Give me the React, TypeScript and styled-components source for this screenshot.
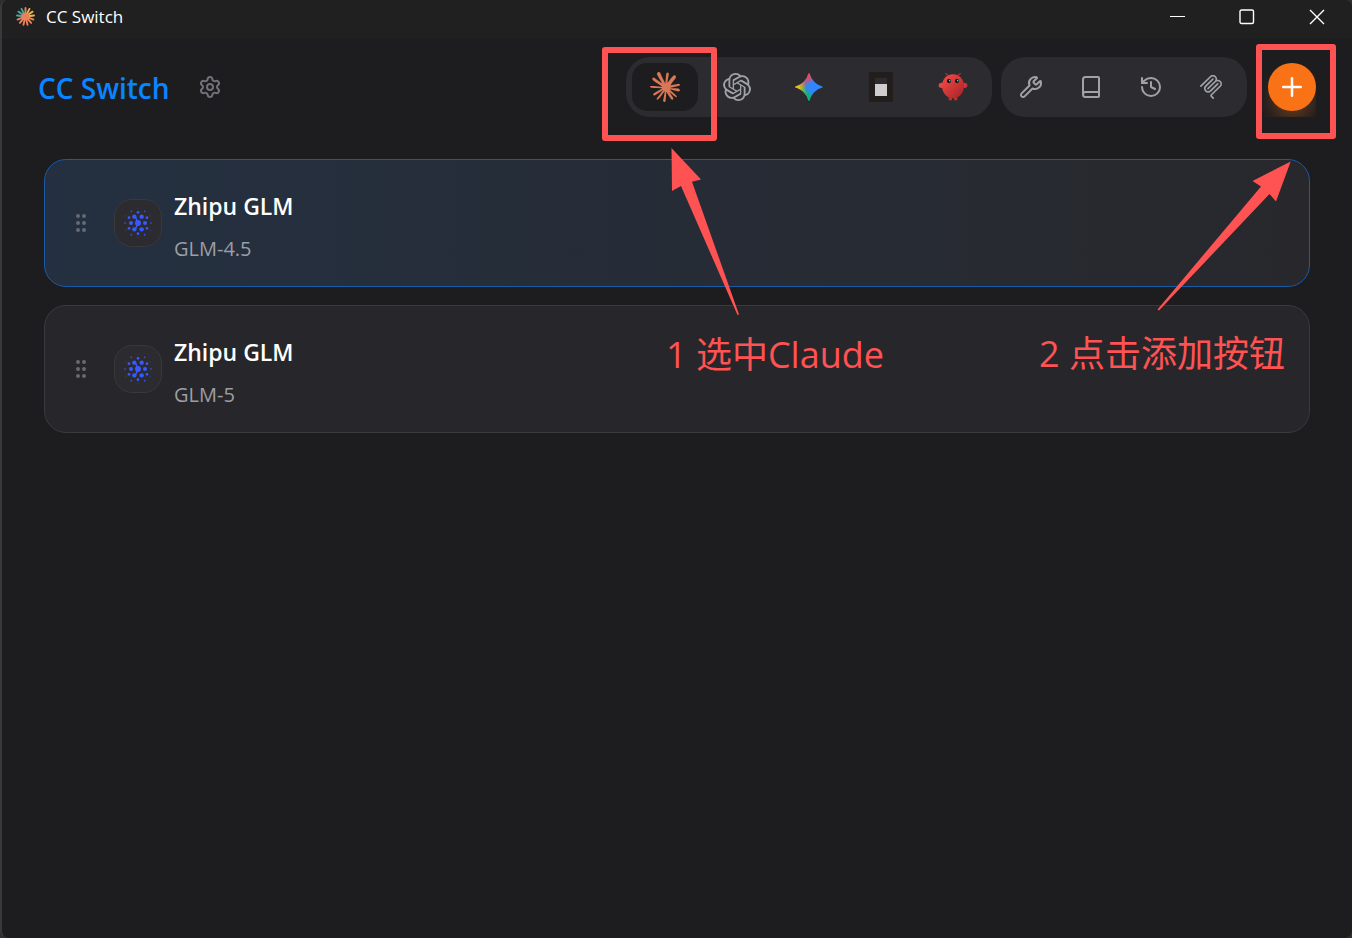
import React from "react";
import styled, { createGlobalStyle, css } from "styled-components";
import { Book, GripVertical, History, Plus, Settings, Wrench } from "lucide-react";
import { SiOpenai } from "react-icons/si";

const GlobalStyle = createGlobalStyle`
  *, *::before, *::after { box-sizing: border-box; }
  body {
    margin: 0;
    background: #2f2f30;
    color: #fafafa;
    font-family: "Open Sans", "Noto Sans CJK SC", sans-serif;
  }
  button { font: inherit; color: inherit; background: none; border: 0; padding: 0; cursor: pointer; }
  svg { display: block; flex: none; }
`;

const Window = styled.div`
  position: relative;
  min-height: 100vh;
  overflow: hidden;
  border-left: 2px solid #39393a;
  border-radius: 8px;
  background: #1d1d1f;
`;

const TitleBar = styled.div`
  display: flex;
  align-items: center;
  justify-content: space-between;
  height: 39px;
  padding: 0 0 6px 14px;
  background: #202020;
`;

const WindowTitle = styled.div`
  display: flex;
  align-items: center;
  gap: 11px;
  font-size: 17px;
  line-height: 24px;
  color: #ffffff;
`;

const WindowControls = styled.div`
  display: flex;
`;

const WindowButton = styled.button`
  display: grid;
  place-items: center;
  width: 70px;
  height: 32px;
`;

const Header = styled.header`
  display: flex;
  align-items: center;
  justify-content: space-between;
  padding: 18px 36px;
`;

const Brand = styled.div`
  display: flex;
  align-items: center;
  gap: 28px;
`;

const BrandName = styled.h1`
  margin: 0;
  padding-top: 2px;
  font-size: 28px;
  line-height: 42px;
  font-weight: 600;
  color: #0a84ff;
`;

const IconButton = styled.button`
  display: grid;
  place-items: center;
  color: #71717a;
`;

const Toolbar = styled.div`
  display: flex;
  align-items: center;
  gap: 9px;
  overflow: hidden;
`;

const Segment = styled.div<{ $spaced?: boolean }>`
  display: flex;
  gap: ${(p) => (p.$spaced ? 12 : 6)}px;
  padding: 6px ${(p) => (p.$spaced ? 12 : 6)}px 6px 6px;
  border-radius: 24px;
  background: #2c2c30;
  color: #a1a1aa;
`;

const SegmentButton = styled.button<{ $width: number; $active?: boolean }>`
  display: grid;
  place-items: center;
  width: ${(p) => p.$width}px;
  height: 48px;
  border-radius: 15px;
  ${(p) =>
    p.$active &&
    css`
      background: #1d1d1f;
      color: #d97757;
    `}
`;

const AddButton = styled.button`
  display: grid;
  place-items: center;
  width: 48px;
  height: 48px;
  margin-left: 12px;
  border-radius: 50%;
  background: #f97316;
  color: #ffffff;
  box-shadow: 0 12px 18px -4px rgba(249, 115, 22, 0.35);
`;

const ProviderList = styled.ul`
  display: flex;
  flex-direction: column;
  gap: 18px;
  margin: 0;
  padding: 24px 42px;
  list-style: none;
`;

const ProviderCard = styled.li<{ $current?: boolean }>`
  display: flex;
  align-items: center;
  gap: 12px;
  padding: 24px;
  border: 1px solid ${(p) => (p.$current ? "#185ba6" : "#3a3a3d")};
  border-radius: 22px;
  background: ${(p) => (p.$current ? "linear-gradient(90deg, #243041, #28282c)" : "#27272b")};
`;

const DragHandle = styled.button`
  width: 33px;
  color: #68696f;
`;

const ProviderIcon = styled.div`
  display: grid;
  place-items: center;
  width: 48px;
  height: 48px;
  border: 1px solid #39393c;
  border-radius: 18px;
  background: #2c2c30;
`;

const ProviderName = styled.h2`
  margin: 0 0 8px;
  font-size: 23px;
  line-height: 44px;
  font-weight: 600;
  color: #ffffff;
`;

const ProviderModel = styled.p`
  margin: 0;
  font-size: 20px;
  line-height: 26px;
  color: #9d9da5;
`;

const Guide = styled.div`
  position: absolute;
  top: 0;
  right: 0;
  width: 760px;
  height: 400px;
  pointer-events: none;
  color: #ff5252;
`;

const Highlight = styled.div<{ $top: number; $right: number; $width: number; $height: number }>`
  position: absolute;
  top: ${(p) => p.$top}px;
  right: ${(p) => p.$right}px;
  width: ${(p) => p.$width}px;
  height: ${(p) => p.$height}px;
  border: 6px solid currentColor;
  border-radius: 3px;
`;

const GuideText = styled.span<{ $top: number; $left: number }>`
  position: absolute;
  top: ${(p) => p.$top}px;
  left: ${(p) => p.$left}px;
  font-size: 36px;
  line-height: 48px;
  white-space: nowrap;
`;

function AppLogo() {
  const colors = ["#e8825a", "#f0b04a", "#f0b04a", "#f0b04a", "#e8825a", "#e8825a", "#e8825a", "#e8825a", "#e8825a", "#e8825a", "#4fa3a0", "#4fa3a0", "#4fa3a0"];
  return (
    <svg width="19" height="19" viewBox="-10 -10 20 20" strokeWidth="2" strokeLinecap="round">
      {colors.map((c, i) => {
        const a = (i * 2 * Math.PI) / colors.length;
        return <line key={i} x1="0" y1="0" x2={9 * Math.sin(a)} y2={-9 * Math.cos(a)} stroke={c} />;
      })}
      <circle r="4" fill="#e8825a" />
    </svg>
  );
}

function ClaudeIcon() {
  return (
    <svg width="30" height="30" viewBox="0 0 24 24" fill="currentColor">
      <path d="M4.709 15.955l4.72-2.647.08-.23-.08-.128H9.2l-.79-.048-2.698-.073-2.339-.097-2.266-.122-.571-.121L0 11.784l.055-.352.48-.321.686.06 1.52.103 2.278.158 1.652.097 2.449.255h.389l.055-.157-.134-.098-.103-.097-2.358-1.596-2.552-1.688-1.336-.972-.724-.491-.364-.462-.158-1.008.656-.722.881.06.225.061.893.686 1.908 1.476 2.491 1.833.365.304.145-.103.019-.073-.164-.274-1.355-2.446-1.446-2.49-.644-1.032-.17-.619a2.97 2.97 0 01-.104-.729L6.283.134 6.696 0l.996.134.42.364.62 1.414 1.002 2.229 1.555 3.03.456.898.243.832.091.255h.158V9.01l.128-1.706.237-2.095.23-2.695.08-.76.376-.91.747-.492.584.28.48.685-.067.444-.286 1.851-.559 2.903-.364 1.942h.212l.243-.242.985-1.306 1.652-2.064.73-.82.85-.904.547-.431h1.033l.76 1.129-.34 1.166-1.064 1.347-.881 1.142-1.264 1.7-.79 1.36.073.11.188-.02 2.856-.606 1.543-.28 1.841-.315.833.388.091.395-.328.807-1.969.486-2.309.462-3.439.813-.042.03.049.061 1.549.146.662.036h1.622l3.02.225.79.522.474.638-.079.485-1.215.62-1.64-.389-3.829-.91-1.312-.329h-.182v.11l1.093 1.068 2.006 1.81 2.509 2.33.127.578-.322.455-.34-.049-2.205-1.657-.851-.747-1.926-1.62h-.128v.17l.444.649 2.345 3.521.122 1.08-.17.353-.608.213-.668-.122-1.374-1.925-1.415-2.167-1.143-1.943-.14.08-.674 7.254-.316.37-.729.28-.607-.461-.322-.747.322-1.476.389-1.924.315-1.53.286-1.9.17-.632-.012-.042-.14.018-1.434 1.967-2.18 2.945-1.726 1.845-.414.164-.717-.37.067-.662.401-.589 2.388-3.036 1.44-1.882.93-1.086-.006-.158h-.055L4.132 18.56l-1.13.146-.487-.456.061-.746.231-.243 1.908-1.312-.006.006z" />
    </svg>
  );
}

function GeminiIcon() {
  const star =
    "M20.616 10.835a14.147 14.147 0 01-4.45-3.001 14.111 14.111 0 01-3.678-6.452.503.503 0 00-.975 0 14.134 14.134 0 01-3.679 6.452 14.155 14.155 0 01-4.45 3.001c-.65.28-1.318.505-2.002.678a.502.502 0 000 .975c.684.172 1.35.397 2.002.677a14.147 14.147 0 014.45 3.001 14.112 14.112 0 013.679 6.453.502.502 0 00.975 0c.172-.685.397-1.351.677-2.003a14.145 14.145 0 013.001-4.45 14.113 14.113 0 016.453-3.678.503.503 0 000-.975 13.245 13.245 0 01-2.003-.678z";
  return (
    <svg width="30" height="30" viewBox="0 0 24 24">
      <defs>
        <linearGradient id="gem-green" gradientUnits="userSpaceOnUse" x1="7" x2="11" y1="15.5" y2="12">
          <stop stopColor="#08B962" />
          <stop offset="1" stopColor="#08B962" stopOpacity="0" />
        </linearGradient>
        <linearGradient id="gem-red" gradientUnits="userSpaceOnUse" x1="8" x2="11.5" y1="5.5" y2="11">
          <stop stopColor="#F94543" />
          <stop offset="1" stopColor="#F94543" stopOpacity="0" />
        </linearGradient>
        <linearGradient id="gem-yellow" gradientUnits="userSpaceOnUse" x1="3.5" x2="17.5" y1="13.5" y2="12">
          <stop stopColor="#FABC12" />
          <stop offset=".46" stopColor="#FABC12" stopOpacity="0" />
        </linearGradient>
      </defs>
      <path d={star} fill="#3186FF" />
      <path d={star} fill="url(#gem-green)" />
      <path d={star} fill="url(#gem-red)" />
      <path d={star} fill="url(#gem-yellow)" />
    </svg>
  );
}

function OpenCodeIcon() {
  return (
    <svg width="30" height="30" viewBox="0 0 30 30">
      <rect x="3" width="24" height="30" fill="#211e1b" />
      <rect x="9" y="6" width="12" height="6" fill="#2c2c30" />
      <rect x="9" y="12" width="12" height="12" fill="#cfcecd" />
    </svg>
  );
}

function ClawIcon() {
  return (
    <svg width="30" height="30" viewBox="0 0 90 90">
      <defs>
        <linearGradient id="claw" x1="0" y1="0" x2="1" y2="1">
          <stop stopColor="#fa4b4b" />
          <stop offset="1" stopColor="#a32222" />
        </linearGradient>
      </defs>
      <path d="M33 13Q29 5 23 5M57 13Q61 5 67 5" stroke="#c93e3e" strokeWidth="3" fill="none" strokeLinecap="round" />
      <circle cx="10" cy="40" r="8" fill="#e84545" />
      <circle cx="80" cy="40" r="8" fill="#c93434" />
      <path d="M32 72h10v13H32zM48 72h10v13H48z" fill="#b93030" />
      <path d="M45 7C65 7 78 24 78 42C78 62 63 79 45 79C27 79 12 62 12 42C12 24 25 7 45 7z" fill="url(#claw)" />
      <circle cx="33" cy="27" r="6" fill="#050810" />
      <circle cx="57" cy="27" r="6" fill="#050810" />
      <circle cx="35" cy="26" r="2.5" fill="#00e5cc" />
      <circle cx="59" cy="26" r="2.5" fill="#00e5cc" />
    </svg>
  );
}

function McpIcon() {
  return (
    <svg width="24" height="24" viewBox="0 0 24 24" fill="currentColor">
      <path d="M15.688 2.343a2.588 2.588 0 00-3.61 0l-9.626 9.44a.863.863 0 01-1.203 0 .823.823 0 010-1.18l9.626-9.44a4.313 4.313 0 016.016 0 4.116 4.116 0 011.204 3.54 4.3 4.3 0 013.609 1.18l.05.05a4.115 4.115 0 010 5.9l-8.706 8.537a.274.274 0 000 .393l1.788 1.754a.823.823 0 010 1.18.863.863 0 01-1.203 0l-1.788-1.753a1.92 1.92 0 010-2.754l8.706-8.538a2.47 2.47 0 000-3.54l-.05-.049a2.588 2.588 0 00-3.607-.003l-7.172 7.034-.002.002-.098.097a.863.863 0 01-1.204 0 .823.823 0 010-1.18l7.273-7.133a2.47 2.47 0 00-.003-3.537z" />
      <path d="M14.485 4.703a.823.823 0 000-1.18.863.863 0 00-1.204 0l-7.119 6.982a4.115 4.115 0 000 5.9 4.314 4.314 0 006.016 0l7.12-6.982a.823.823 0 000-1.18.863.863 0 00-1.204 0l-7.119 6.982a2.588 2.588 0 01-3.61 0 2.47 2.47 0 010-3.54l7.12-6.982z" />
    </svg>
  );
}

/* x, y, radius and opacity of each dot around the centre */
const dots: [number, number, number, number][] = [
  [21, 0, 6, 1], [-21, 0, 6, 1], [11, -19, 6.5, 1], [-11, -19, 6.5, 1], [11, 19, 6.5, 1], [-11, 19, 6.5, 1],
  [0, -32, 4, 1], [0, 32, 4, 1], [27, -16, 4, 1], [-27, -16, 4, 1], [27, 16, 4, 1], [-27, 16, 4, 1],
  [39, 0, 3, 0.6], [-39, 0, 3, 0.6], [20, -35, 2.5, 0.9], [-20, -35, 2.5, 0.9], [20, 35, 2.5, 0.9], [-20, 35, 2.5, 0.9],
  [37, -22, 1.5, 0.6], [-37, -22, 1.5, 0.6], [37, 22, 1.5, 0.6], [-37, 22, 1.5, 0.6], [0, -43, 1.5, 0.4], [0, 43, 1.5, 0.4],
];

function ZhipuIcon() {
  return (
    <svg width="30" height="30" viewBox="-45 -45 90 90" fill="#3859ff">
      {dots.map(([x, y, r, o]) => (
        <circle key={`${x},${y}`} cx={x} cy={y} r={r} opacity={o} />
      ))}
      <circle r="9" />
      <path d="M-11 -19Q-2 -14 -4 -3M-11 19Q-2 14 -4 3" fill="none" stroke="#3859ff" strokeWidth="4" />
    </svg>
  );
}

const apps = [
  { name: "Claude", icon: <ClaudeIcon />, active: true },
  { name: "Codex", icon: <SiOpenai size={28} /> },
  { name: "Gemini", icon: <GeminiIcon /> },
  { name: "OpenCode", icon: <OpenCodeIcon /> },
  { name: "OpenClaw", icon: <ClawIcon /> },
];

const tools = [
  { name: "Skills", icon: <Wrench size={24} /> },
  { name: "Prompts", icon: <Book size={24} /> },
  { name: "Sessions", icon: <History size={24} /> },
  { name: "MCP", icon: <McpIcon /> },
];

const providers = [
  { name: "Zhipu GLM", model: "GLM-4.5", current: true },
  { name: "Zhipu GLM", model: "GLM-5", current: false },
];

export default function App() {
  return (
    <>
      <GlobalStyle />
      <Window>
        <TitleBar>
          <WindowTitle>
            <AppLogo />
            CC Switch
          </WindowTitle>
          <WindowControls>
            <WindowButton aria-label="Minimize">
              <svg width="16" height="16" stroke="#fff" fill="none"><path d="M1 7.5h15" /></svg>
            </WindowButton>
            <WindowButton aria-label="Maximize">
              <svg width="16" height="16" stroke="#fff" strokeWidth="1.4" fill="none"><rect x="1" y="1" width="13.5" height="13.5" rx="1.5" /></svg>
            </WindowButton>
            <WindowButton aria-label="Close">
              <svg width="16" height="16" stroke="#fff" strokeWidth="1.4" fill="none"><path d="M1 1l14 14M15 1L1 15" /></svg>
            </WindowButton>
          </WindowControls>
        </TitleBar>

        <Header>
          <Brand>
            <BrandName>CC Switch</BrandName>
            <IconButton aria-label="Settings"><Settings size={24} /></IconButton>
          </Brand>
          <Toolbar>
            <Segment>
              {apps.map((a) => (
                <SegmentButton key={a.name} $width={66} $active={a.active} aria-label={a.name}>{a.icon}</SegmentButton>
              ))}
            </Segment>
            <Segment $spaced>
              {tools.map((t) => (
                <SegmentButton key={t.name} $width={48} aria-label={t.name}>{t.icon}</SegmentButton>
              ))}
            </Segment>
            <AddButton aria-label="Add provider"><Plus size={30} /></AddButton>
          </Toolbar>
        </Header>

        <ProviderList>
          {providers.map((p) => (
            <ProviderCard key={p.model} $current={p.current}>
              <DragHandle aria-label="Reorder"><GripVertical size={24} /></DragHandle>
              <ProviderIcon><ZhipuIcon /></ProviderIcon>
              <div>
                <ProviderName>{p.name}</ProviderName>
                <ProviderModel>{p.model}</ProviderModel>
              </div>
            </ProviderCard>
          ))}
        </ProviderList>

        <Guide>
          <Highlight $top={47} $right={635} $width={115} $height={94} />
          <Highlight $top={44} $right={16} $width={80} $height={95} />
          <svg width="760" height="400" viewBox="592 0 760 400" fill="currentColor">
            <path d="M671.5 148L701 179.5L692 181.7L739 314.5L737.5 315L681 186L672 191z" />
            <path d="M1290.7 161.5L1276 201.5L1269.5 194L1159 310.5L1157.5 309.5L1261 186.5L1252.5 181z" />
          </svg>
          <GuideText $top={331} $left={74}>1 选中Claude</GuideText>
          <GuideText $top={330} $left={447}>2 点击添加按钮</GuideText>
        </Guide>
      </Window>
    </>
  );
}
